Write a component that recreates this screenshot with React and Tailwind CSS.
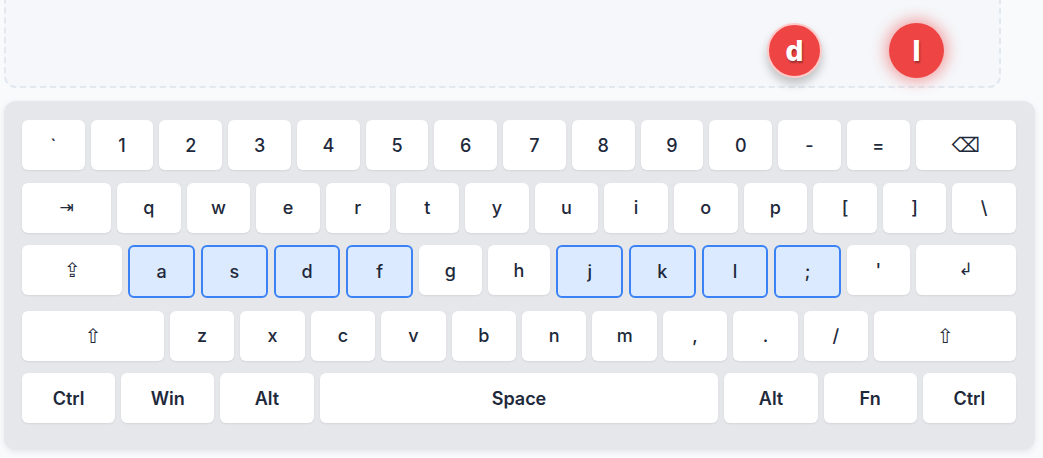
import React from 'react';

const rows = [
  [
    { k: '`' }, { k: '1' }, { k: '2' }, { k: '3' }, { k: '4' }, { k: '5' }, { k: '6' },
    { k: '7' }, { k: '8' }, { k: '9' }, { k: '0' }, { k: '-' }, { k: '=' },
    { k: '⌫', grow: 'flex-[1.6]', sym: true },
  ],
  [
    { k: '⇥', grow: 'flex-[1.4]', sym: true, small: true },
    { k: 'q' }, { k: 'w' }, { k: 'e' }, { k: 'r' }, { k: 't' }, { k: 'y' }, { k: 'u' },
    { k: 'i' }, { k: 'o' }, { k: 'p' }, { k: '[' }, { k: ']' }, { k: '\\' },
  ],
  [
    { k: '⇪', grow: 'flex-[1.6]', sym: true },
    { k: 'a', hl: true }, { k: 's', hl: true }, { k: 'd', hl: true }, { k: 'f', hl: true },
    { k: 'g' }, { k: 'h' },
    { k: 'j', hl: true }, { k: 'k', hl: true }, { k: 'l', hl: true }, { k: ';', hl: true },
    { k: "'" },
    { k: '↲', grow: 'flex-[1.6]', sym: true, small: true },
  ],
  [
    { k: '⇧', grow: 'flex-[2.2]', sym: true },
    { k: 'z' }, { k: 'x' }, { k: 'c' }, { k: 'v' }, { k: 'b' }, { k: 'n' }, { k: 'm' },
    { k: ',' }, { k: '.' }, { k: '/' },
    { k: '⇧', grow: 'flex-[2.2]', sym: true },
  ],
  [
    { k: 'Ctrl', bold: true }, { k: 'Win', bold: true }, { k: 'Alt', bold: true },
    { k: 'Space', grow: 'flex-[4.28]', bold: true },
    { k: 'Alt', bold: true }, { k: 'Fn', bold: true }, { k: 'Ctrl', bold: true },
  ],
];

const Key = ({ item }) => {
  const grow = item.grow || 'flex-1';
  const look = item.hl
    ? 'h-[53px] bg-[#dbeafe] border-2 border-[#3b82f6]'
    : 'h-[50px] bg-white shadow-[0_1px_2px_rgba(0,0,0,0.08)]';
  const text = item.sym
    ? item.small
      ? 'text-[17px] font-["DejaVu_Sans",sans-serif]'
      : 'text-[20px] font-["DejaVu_Sans",sans-serif]'
    : item.bold
      ? 'text-[18px] font-semibold'
      : 'text-[18px] font-medium';
  return (
    <div className={`${grow} ${look} min-w-0 rounded-md flex items-center justify-center text-[#1e293b] ${text}`}>
      {item.k}
    </div>
  );
};

export default function App() {
  return (
    <div className="w-[1043px] h-[458px] overflow-hidden bg-[#f8fafc] pl-1" style={{ fontFamily: 'Inter, "Liberation Sans", sans-serif' }}>
      {/* drop zone with falling letters */}
      <div className="relative w-[997px] h-[110px] -mt-[22px] rounded-xl border-2 border-dashed border-[#e2e8f0] bg-[#f5f7fa]">
        <div className="absolute left-[761px] top-[43px] w-[55px] h-[55px] rounded-full bg-[#ef4444] border-2 border-[#fecaca] shadow-[0_6px_10px_rgba(0,0,0,0.22)] flex items-center justify-center text-white text-[28px] font-extrabold [text-shadow:1px_2px_2px_rgba(0,0,0,0.35)]">
          d
        </div>
        <div className="absolute left-[883px] top-[43px] w-[55px] h-[55px] rounded-full bg-[#ef4444] shadow-[0_0_14px_4px_rgba(239,68,68,0.45)] flex items-center justify-center text-white text-[28px] font-extrabold [text-shadow:1px_2px_2px_rgba(0,0,0,0.35)]">
          l
        </div>
      </div>

      {/* keyboard */}
      <div className="mt-[13px] w-[1031px] rounded-xl bg-[#e5e7eb] pt-[19px] pl-[18px] pr-[19px] pb-[27px] shadow-[0_2px_6px_rgba(0,0,0,0.08)] flex flex-col gap-[12.5px]">
        {rows.map((row, i) => (
          <div key={i} className="flex items-start gap-1.5">
            {row.map((item, j) => (
              <Key key={j} item={item} />
            ))}
          </div>
        ))}
      </div>
    </div>
  );
}
